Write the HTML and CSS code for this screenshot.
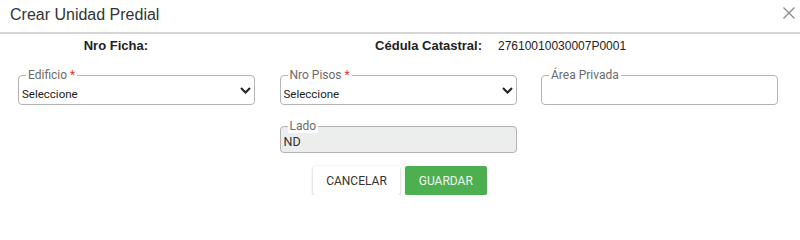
FILE: index.html
```html
<!DOCTYPE html>
<html lang="es">
<head>
<meta charset="utf-8">
<title>Crear Unidad Predial</title>
<link rel="stylesheet" href="styles.css">
</head>
<body>
<div class="modal">
  <header class="modal-header">
    <h1 class="modal-title">Crear Unidad Predial</h1>
    <button class="close" type="button" aria-label="Cerrar">
      <svg width="12" height="12" viewBox="0 0 12 12"><path d="M0.5 0.5 L11.5 11.5 M11.5 0.5 L0.5 11.5" stroke="#8a8a8a" stroke-width="1.3" fill="none"/></svg>
    </button>
  </header>
  <div class="info-row">
    <span class="info-label">Nro Ficha:</span>
    <span class="info-value"></span>
    <span class="info-label">Cédula Catastral:</span>
    <span class="info-value">27610010030007P0001</span>
  </div>
  <form class="form-grid">
    <fieldset class="field">
      <legend class="field-legend">Edificio <span class="req">*</span></legend>
      <div class="select-wrap">
        <select class="field-select"><option>Seleccione</option></select>
        <svg class="chevron" width="11" height="7" viewBox="0 0 11 7"><path d="M1 1 L5.5 5.5 L10 1" stroke="#222" stroke-width="2" fill="none"/></svg>
      </div>
    </fieldset>
    <fieldset class="field">
      <legend class="field-legend">Nro Pisos <span class="req">*</span></legend>
      <div class="select-wrap">
        <select class="field-select"><option>Seleccione</option></select>
        <svg class="chevron" width="11" height="7" viewBox="0 0 11 7"><path d="M1 1 L5.5 5.5 L10 1" stroke="#222" stroke-width="2" fill="none"/></svg>
      </div>
    </fieldset>
    <fieldset class="field">
      <legend class="field-legend">Área Privada</legend>
      <input class="field-input" type="text">
    </fieldset>
    <fieldset class="field field-disabled field-col2">
      <legend class="field-legend">Lado</legend>
      <input class="field-input field-input-lg" type="text" value="ND" disabled>
    </fieldset>
  </form>
  <div class="actions">
    <button class="btn btn-default" type="button">Cancelar</button>
    <button class="btn btn-success" type="button">Guardar</button>
  </div>
</div>
</body>
</html>
```
FILE: styles.css
```css
* { box-sizing: border-box; }
html, body { margin: 0; padding: 0; background: #fff; }
body { font-family: Roboto, "Liberation Sans", Arial, sans-serif; color: #222; }

.modal { width: 800px; }

.modal-header {
  height: 34px;
  padding: 5px 5px 0 10px;
  border-bottom: 2px solid #d6d6d6;
  display: flex;
  justify-content: space-between;
  align-items: flex-start;
}
.modal-title {
  margin: 0;
  font-family: "Liberation Sans", Arial, sans-serif;
  font-weight: normal;
  font-size: 16px;
  line-height: 20px;
  color: #333;
}
.close {
  border: 0;
  background: none;
  padding: 0;
  margin-top: 2px;
  width: 12px;
  height: 12px;
  display: block;
}
.close svg { display: block; }

.info-row {
  margin-top: 4px;
  display: grid;
  grid-template-columns: 148px 154px 148px 1fr;
  column-gap: 16px;
  font-family: "Liberation Sans", Arial, sans-serif;
  line-height: 16px;
}
.info-label { font-weight: bold; font-size: 13px; text-align: right; color: #222; }
.info-value { font-size: 12px; color: #222; }

.form-grid {
  margin: 14px 0 0;
  padding: 0 22px 0 18px;
  display: grid;
  grid-template-columns: repeat(3, 1fr);
  column-gap: 24.5px;
  row-gap: 14px;
}

.field {
  margin: 0;
  min-width: 0;
  padding: 0 2px 1px 2px;
  border: 1px solid #b3b3b3;
  border-radius: 4px;
}
.field-legend {
  margin-left: 5px;
  padding: 0 2px;
  font-size: 12px;
  line-height: 14px;
  color: #6b6b6b;
}
.req { color: #e53935; }

.select-wrap {
  display: flex;
  align-items: flex-start;
  margin-top: 3px;
}
.field-select {
  flex: 1;
  min-width: 0;
  -webkit-appearance: none;
  appearance: none;
  border: 0;
  outline: 0;
  background: transparent;
  padding: 0 0 0 1px;
  margin: 0;
  height: 18px;
  line-height: 18px;
  font-family: Roboto, sans-serif;
  font-size: 11.5px;
  color: #222;
}
.chevron { display: block; margin: 2px 1px 0 0; flex: none; }

.field-input {
  display: block;
  width: 100%;
  border: 0;
  outline: 0;
  background: transparent;
  padding: 0 1px;
  margin: 3px 0 0;
  height: 18px;
  line-height: 18px;
  font-family: Roboto, sans-serif;
  font-size: 12px;
  color: #222;
}
.field-input-lg { margin-top: 0; font-size: 12.5px; color: #333; }
.field-input:disabled { color: #333; -webkit-text-fill-color: #333; opacity: 1; }

.field-disabled { background: #eceeed; }
.field-disabled .field-legend { background: #fff; }
.field-col2 { grid-column: 2; }

.actions {
  margin-top: 13px;
  display: flex;
  justify-content: center;
  gap: 5px;
}
.btn {
  height: 29px;
  padding: 0 13px;
  border: 0;
  border-radius: 2px;
  font-family: Roboto, sans-serif;
  font-size: 12px;
  text-transform: uppercase;
  cursor: pointer;
}
.btn-default {
  background: #fff;
  color: #333;
  box-shadow: 0 1px 3px rgba(0,0,0,0.28);
}
.btn-success {
  background: #4caf50;
  color: #eef8ee;
  box-shadow: 0 1px 2px rgba(0,0,0,0.2);
  padding: 0 14px;
}
```
